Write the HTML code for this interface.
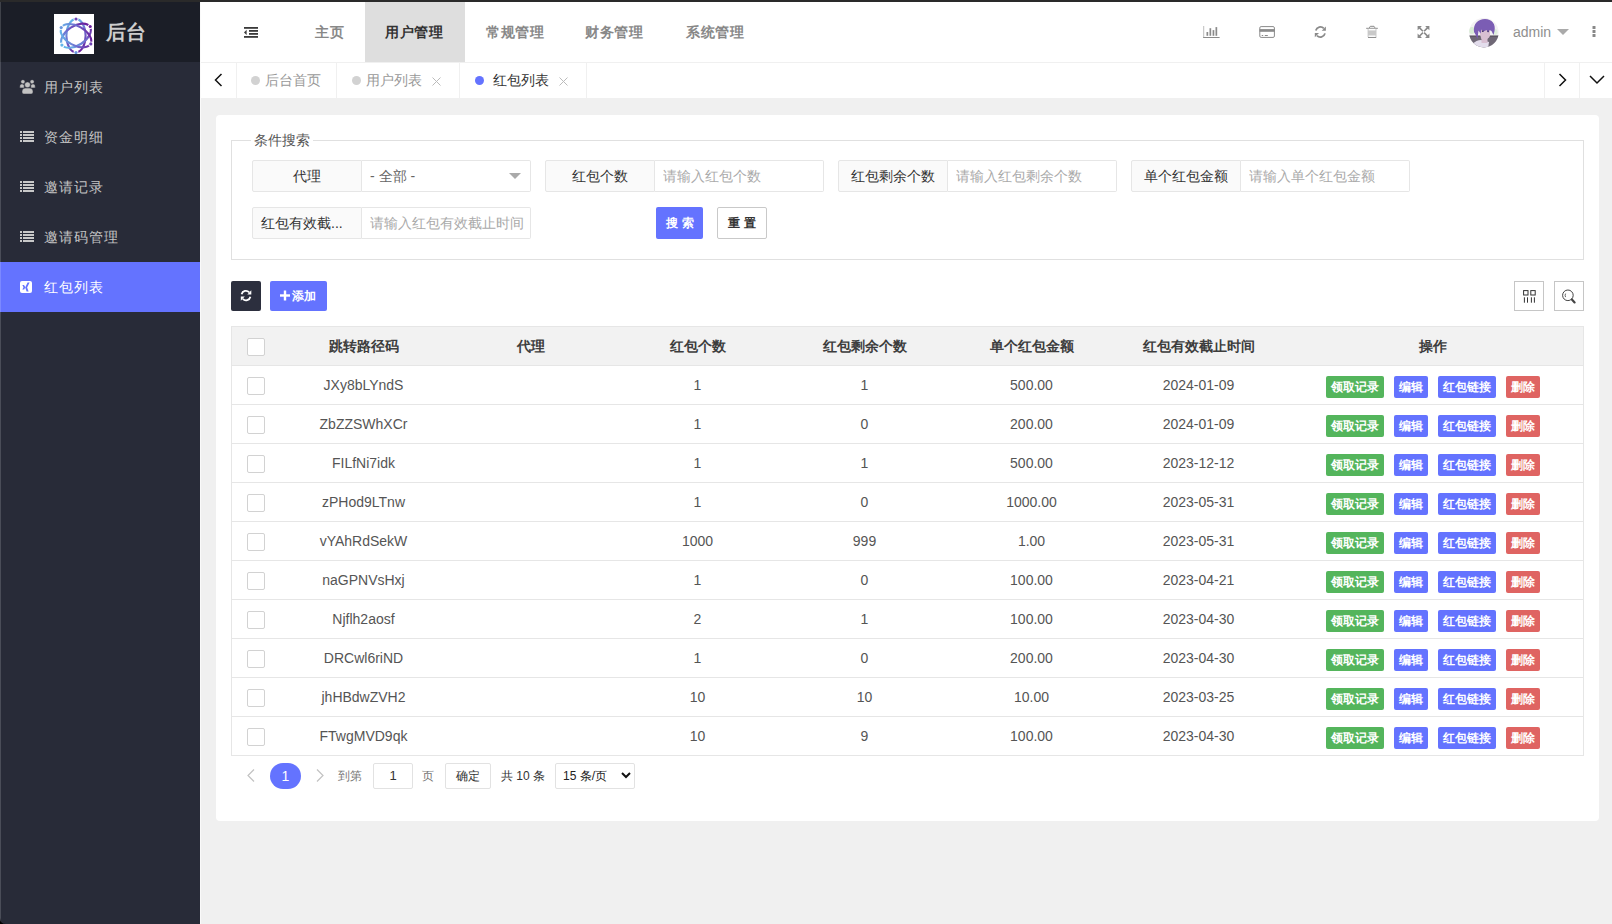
<!DOCTYPE html><html><head><meta charset="utf-8"><title>后台</title><style>
*{box-sizing:border-box;margin:0;padding:0}
html,body{width:1612px;height:924px;overflow:hidden}
body{position:relative;background:#f0f0f0;font-family:"Liberation Sans",sans-serif;font-size:14px;color:#333}
.a{position:absolute}
.tx{position:absolute;white-space:nowrap}
</style></head><body>
<div class="a" style="left:0;top:0;width:1612px;height:2px;background:#2a2a2a"></div>
<div class="a" style="left:0;top:62px;width:200px;height:862px;background:#282b38"></div>
<div class="a" style="left:0;top:2px;width:200px;height:60px;background:#1b1e27"></div>
<div class="a" style="left:200px;top:2px;width:1px;height:922px;background:#fafafa"></div>
<svg class="a" style="left:54px;top:14px" width="40" height="40" viewBox="0 0 40 40">
<rect x="0" y="0" width="40" height="40" fill="#fff"/>
<defs><linearGradient id="lg" gradientUnits="userSpaceOnUse" x1="8" y1="30" x2="36" y2="14"><stop offset="0" stop-color="#64b8ea"/><stop offset="0.5" stop-color="#6f6fd0"/><stop offset="1" stop-color="#6a1d9c"/></linearGradient></defs>
<g fill="none" stroke="url(#lg)" stroke-width="2.1">
<ellipse cx="22" cy="21.7" rx="16.6" ry="9.6" transform="rotate(90 22 21.7)"/>
<ellipse cx="22" cy="21.7" rx="16.6" ry="9.6" transform="rotate(-33 22 21.7)"/>
<ellipse cx="22" cy="21.7" rx="16.6" ry="9.6" transform="rotate(29 22 21.7)"/>
</g>
<g fill="#fff"><circle cx="22" cy="5" r="2.5"/><circle cx="36.2" cy="12.5" r="2.5"/><circle cx="36.8" cy="29.9" r="2.5"/><circle cx="7.2" cy="13.6" r="2.5"/><circle cx="7.9" cy="31.1" r="2.5"/><circle cx="22" cy="38.5" r="2.5"/></g>
<g fill="url(#lg)"><circle cx="22" cy="5" r="1.6"/><circle cx="36.2" cy="12.5" r="1.6"/><circle cx="36.8" cy="29.9" r="1.6"/><circle cx="7.2" cy="13.6" r="1.6"/><circle cx="7.9" cy="31.1" r="1.6"/><circle cx="22" cy="38.5" r="1.6"/></g>
</svg>
<div class="tx" style="left:106px;top:19px;font-size:20px;line-height:26px;color:#cdcdcd;font-weight:bold">后台</div>
<svg class="a" style="left:16px;top:76px" width="24" height="22" viewBox="0 0 24 22"><g fill="#c2c2c2" stroke="#282b38" stroke-width="0.5"><circle cx="6.9" cy="5.8" r="2.1"/><circle cx="16.1" cy="5.8" r="2.1"/><path d="M3.8 11.9 V10 C3.8 8.6 4.8 7.9 6 7.9 C7.2 7.9 8.2 8.6 8.2 10 V11.9Z"/><path d="M14.8 11.9 V10 C14.8 8.6 15.8 7.9 17 7.9 C18.2 7.9 19.2 8.6 19.2 10 V11.9Z"/><circle cx="11.5" cy="8.8" r="2.9"/><path d="M6 15.5 C6 13.2 7.5 12.1 9.5 12.1 H13.5 C15.5 12.1 17 13.2 17 15.5 V16 C17 17.4 16 18 14.8 18 H8.2 C7 18 6 17.4 6 16Z"/></g></svg>
<div class="tx" style="left:44px;top:62px;line-height:50px;font-size:14px;letter-spacing:1px;color:#c4c4c4">用户列表</div>
<svg class="a" style="left:20px;top:131px" width="14" height="11" viewBox="0 0 14 11" fill="#c8c8c8"><rect x="0" y="0" width="2" height="2"/><rect x="3" y="0" width="11" height="2"/><rect x="0" y="3" width="2" height="2"/><rect x="3" y="3" width="11" height="2"/><rect x="0" y="6" width="2" height="2"/><rect x="3" y="6" width="11" height="2"/><rect x="0" y="9" width="2" height="2"/><rect x="3" y="9" width="11" height="2"/></svg>
<div class="tx" style="left:44px;top:112px;line-height:50px;font-size:14px;letter-spacing:1px;color:#c4c4c4">资金明细</div>
<svg class="a" style="left:20px;top:181px" width="14" height="11" viewBox="0 0 14 11" fill="#c8c8c8"><rect x="0" y="0" width="2" height="2"/><rect x="3" y="0" width="11" height="2"/><rect x="0" y="3" width="2" height="2"/><rect x="3" y="3" width="11" height="2"/><rect x="0" y="6" width="2" height="2"/><rect x="3" y="6" width="11" height="2"/><rect x="0" y="9" width="2" height="2"/><rect x="3" y="9" width="11" height="2"/></svg>
<div class="tx" style="left:44px;top:162px;line-height:50px;font-size:14px;letter-spacing:1px;color:#c4c4c4">邀请记录</div>
<svg class="a" style="left:20px;top:231px" width="14" height="11" viewBox="0 0 14 11" fill="#c8c8c8"><rect x="0" y="0" width="2" height="2"/><rect x="3" y="0" width="11" height="2"/><rect x="0" y="3" width="2" height="2"/><rect x="3" y="3" width="11" height="2"/><rect x="0" y="6" width="2" height="2"/><rect x="3" y="6" width="11" height="2"/><rect x="0" y="9" width="2" height="2"/><rect x="3" y="9" width="11" height="2"/></svg>
<div class="tx" style="left:44px;top:212px;line-height:50px;font-size:14px;letter-spacing:1px;color:#c4c4c4">邀请码管理</div>
<div class="a" style="left:0;top:262px;width:200px;height:50px;background:#6473ff"></div>
<svg class="a" style="left:20px;top:281px" width="12" height="12" viewBox="0 0 12 12"><rect x="0" y="0" width="12" height="12" rx="2" fill="#fff"/><path d="M2.3 4 H4 L5.3 6.2 L4.2 8.4 H2.3 L3.5 6.2 Z" fill="#6473ff"/><path d="M7.6 1.4 H9.6 L7.1 6.6 L8.6 10.5 H6.6 L5.2 6.6 Z" fill="#6473ff"/></svg>
<div class="tx" style="left:44px;top:262px;line-height:50px;font-size:14px;letter-spacing:1px;color:#fff">红包列表</div>
<div class="a" style="left:0;top:2px;width:1px;height:922px;background:rgba(255,255,255,0.16)"></div>
<svg class="a" style="left:0;top:918px" width="6" height="6" viewBox="0 0 6 6"><path d="M0 0 Q0 6 6 6 H0Z" fill="#000"/></svg>
<div class="a" style="left:201px;top:2px;width:1411px;height:60px;background:#fff"></div>
<div class="a" style="left:365px;top:2px;width:100px;height:60px;background:#dedede"></div>
<svg class="a" style="left:244px;top:27px" width="14" height="11" viewBox="0 0 14 11" fill="#3a3a3a"><rect x="0" y="0" width="14" height="1.8"/><rect x="5" y="3" width="9" height="1.8"/><rect x="5" y="6" width="9" height="1.8"/><rect x="0" y="9" width="14" height="1.8"/><path d="M0 5.4 L2.6 2.8 V8Z"/></svg>
<div class="tx" style="left:315px;top:2px;line-height:60px;font-size:14px;font-weight:bold;letter-spacing:0.6px;color:#888">主页</div>
<div class="tx" style="left:385px;top:2px;line-height:60px;font-size:14px;font-weight:bold;letter-spacing:0.6px;color:#333">用户管理</div>
<div class="tx" style="left:486px;top:2px;line-height:60px;font-size:14px;font-weight:bold;letter-spacing:0.6px;color:#888">常规管理</div>
<div class="tx" style="left:585px;top:2px;line-height:60px;font-size:14px;font-weight:bold;letter-spacing:0.6px;color:#888">财务管理</div>
<div class="tx" style="left:686px;top:2px;line-height:60px;font-size:14px;font-weight:bold;letter-spacing:0.6px;color:#888">系统管理</div>
<svg class="a" style="left:1198px;top:20px" width="24" height="20" viewBox="0 0 24 20"><rect x="5.2" y="6" width="1" height="12" fill="#bdbdbd"/><rect x="5.2" y="17" width="16.4" height="1" fill="#8a8a8a"/><g fill="#8a8a8a"><rect x="8.5" y="12" width="1.7" height="3.8"/><rect x="11.5" y="8.2" width="1.7" height="7.6"/><rect x="14.6" y="10.1" width="1.7" height="5.7"/><rect x="17.5" y="7.1" width="1.7" height="8.7"/></g></svg>
<svg class="a" style="left:1254px;top:20px" width="24" height="20" viewBox="0 0 24 20"><rect x="5.8" y="6.6" width="14.6" height="10.8" rx="1.3" fill="none" stroke="#8a8a8a" stroke-width="1"/><rect x="5.5" y="9.1" width="15.2" height="2.7" fill="#8a8a8a"/><rect x="7.7" y="15" width="1.5" height="1" fill="#8a8a8a"/><rect x="10.8" y="15" width="3" height="1" fill="#8a8a8a"/></svg>
<svg class="a" style="left:1308px;top:20px" width="24" height="20" viewBox="0 0 24 20"><g fill="none" stroke="#8a8a8a" stroke-width="1.8"><path d="M7.8 10.4 A4.7 4.7 0 0 1 15.8 8.4"/><path d="M17 13.4 A4.7 4.7 0 0 1 9 15.6"/></g><g fill="#8a8a8a"><path d="M17.9 6.5 V10.7 H13.7Z"/><path d="M6.8 13.1 H11 L6.8 17.3Z"/></g></svg>
<svg class="a" style="left:1360px;top:20px" width="24" height="20" viewBox="0 0 24 20"><rect x="6.2" y="7.8" width="11.6" height="1" fill="#8a8a8a"/><path d="M9.3 7.9 L10.3 6.3 H14 L15 7.9" fill="none" stroke="#8a8a8a" stroke-width="1"/><path d="M7.6 8.8 H16.5 V16.5 Q16.5 17.9 15.2 17.9 H8.9 Q7.6 17.9 7.6 16.5Z" fill="#c9c9c9"/><rect x="8.6" y="9" width="6.9" height="1.4" fill="#fff"/><rect x="8.6" y="15.5" width="6.9" height="1.4" fill="#fff"/><rect x="8" y="17" width="8.2" height="0.9" fill="#8a8a8a"/></svg>
<svg class="a" style="left:1410px;top:20px" width="24" height="20" viewBox="0 0 24 20" fill="#8a8a8a"><path d="M7.6 6.1 H11.9 L10.4 7.6 L13.5 10.7 L12.4 11.8 L9.3 8.7 L7.6 10.3Z"/><path d="M19.4 6.1 V10.3 L17.8 8.7 L14.7 11.8 L13.5 10.7 L16.6 7.6 L15.1 6.1Z"/><path d="M7.6 17.9 V13.6 L9.3 15.2 L12.4 12.1 L13.5 13.2 L10.4 16.3 L11.9 17.9Z"/><path d="M19.4 17.9 H15.1 L16.6 16.3 L13.5 13.2 L14.7 12.1 L17.8 15.2 L19.4 13.6Z"/></svg>
<svg class="a" style="left:1469px;top:18px" width="30" height="30" viewBox="0 0 30 30"><defs><clipPath id="av"><circle cx="14.9" cy="14.6" r="14.8"/></clipPath></defs><g clip-path="url(#av)">
<rect width="30" height="30" fill="#f3f1f3"/><ellipse cx="3" cy="12.5" rx="3" ry="3.5" fill="#d9ecd6"/><ellipse cx="26" cy="14" rx="2.5" ry="3" fill="#deefdc"/>
<rect x="0" y="18" width="30" height="13" fill="#6f6876"/><rect x="0" y="17.5" width="30" height="1" fill="#4d4650"/>
<path d="M3 27 C6 23 9 22 12 22 L20 24 L19 31 L3 31Z" fill="#e3ddec"/>
<path d="M10.5 10 C12 8 19 8 21 11 L21 18 C19.5 21.5 15 22.5 12.5 21 C11 18 10.5 14 10.5 10Z" fill="#d8bfd2"/><rect x="12.5" y="18" width="6" height="7" fill="#d8bfd2"/>
<path d="M5 14 C4 6 9 1 16 1 C23 1 27 6 25.5 13 L24.5 17 L22.5 13 L20.5 12 L19.5 14.5 L17.5 12 L14.5 13.5 L12.5 11.5 L11.5 15.5 L9.5 12.5 L8.5 21 L6.5 16.5Z" fill="#7b5db4"/>
<circle cx="13.8" cy="13.2" r="0.9" fill="#4a3a70"/><circle cx="19" cy="13.4" r="0.8" fill="#4a3a70"/>
</g></svg>
<div class="tx" style="left:1513px;top:21px;line-height:22px;font-size:14px;color:#8f8f8f">admin</div>
<svg class="a" style="left:1557px;top:29px" width="12" height="6" viewBox="0 0 12 6"><path d="M0 0H12L6 6Z" fill="#aaa"/></svg>
<svg class="a" style="left:1592px;top:26px" width="4" height="11" viewBox="0 0 4 11" fill="#888"><rect x="0.5" y="0" width="3" height="3" rx="0.5"/><rect x="0.5" y="4" width="3" height="3" rx="0.5"/><rect x="0.5" y="8" width="3" height="3" rx="0.5"/></svg>
<div class="a" style="left:201px;top:62px;width:1411px;height:36px;background:#fff;border-top:1px solid #f0f0f0"></div>
<div class="a" style="left:236px;top:63px;width:1px;height:35px;background:#f0f0f0"></div>
<div class="a" style="left:336px;top:63px;width:1px;height:35px;background:#f0f0f0"></div>
<div class="a" style="left:459px;top:63px;width:1px;height:35px;background:#f0f0f0"></div>
<div class="a" style="left:586px;top:63px;width:1px;height:35px;background:#f0f0f0"></div>
<div class="a" style="left:1544px;top:63px;width:1px;height:35px;background:#f0f0f0"></div>
<div class="a" style="left:1579px;top:63px;width:1px;height:35px;background:#f0f0f0"></div>
<svg class="a" style="left:214px;top:73px" width="9" height="14" viewBox="0 0 9 14"><path d="M7.5 1 L1.5 7 L7.5 13" fill="none" stroke="#111" stroke-width="1.5"/></svg>
<svg class="a" style="left:1558px;top:73px" width="9" height="14" viewBox="0 0 9 14"><path d="M1.5 1 L7.5 7 L1.5 13" fill="none" stroke="#111" stroke-width="1.5"/></svg>
<svg class="a" style="left:1589px;top:75px" width="16" height="10" viewBox="0 0 16 10"><path d="M1 1 L8 8 L15 1" fill="none" stroke="#111" stroke-width="1.5"/></svg>
<div class="a" style="left:251px;top:76px;width:9px;height:9px;border-radius:50%;background:#d2d2d2"></div>
<div class="a" style="left:352px;top:76px;width:9px;height:9px;border-radius:50%;background:#d2d2d2"></div>
<div class="a" style="left:475px;top:76px;width:9px;height:9px;border-radius:50%;background:#6473ff"></div>
<div class="tx" style="left:265px;top:70px;line-height:20px;font-size:14px;color:#999">后台首页</div>
<div class="tx" style="left:366px;top:70px;line-height:20px;font-size:14px;color:#999">用户列表</div>
<div class="tx" style="left:493px;top:70px;line-height:20px;font-size:14px;color:#333">红包列表</div>
<svg class="a" style="left:432px;top:77px" width="9" height="9" viewBox="0 0 9 9"><path d="M0.5 0.5L8.5 8.5M8.5 0.5L0.5 8.5" stroke="#bbb" stroke-width="1"/></svg>
<svg class="a" style="left:559px;top:77px" width="9" height="9" viewBox="0 0 9 9"><path d="M0.5 0.5L8.5 8.5M8.5 0.5L0.5 8.5" stroke="#bbb" stroke-width="1"/></svg>
<div class="a" style="left:216px;top:115px;width:1383px;height:706px;background:#fff;border-radius:4px"></div>
<div class="a" style="left:231px;top:140px;width:1353px;height:120px;border:1px solid #e0e0e0"></div>
<div class="tx" style="left:251px;top:130px;padding:0 3px;background:#fff;line-height:20px;font-size:14px;color:#555">条件搜索</div>
<div class="a" style="left:252px;top:160px;width:110px;height:32px;background:#fafafa;border:1px solid #e6e6e6;border-radius:2px 0 0 2px"></div>
<div class="a" style="left:252px;top:160px;width:110px;height:32px;line-height:32px;text-align:center;color:#333;white-space:nowrap">代理</div>
<div class="a" style="left:362px;top:160px;width:169px;height:32px;background:#fff;border:1px solid #e6e6e6;border-left:0;border-radius:0 2px 2px 0;"></div>
<div class="a" style="left:370px;top:160px;width:157px;height:32px;line-height:32px;color:#666;white-space:nowrap;overflow:hidden">- 全部 -</div>
<svg class="a" style="left:509px;top:173px" width="12" height="6" viewBox="0 0 12 6"><path d="M0 0H12L6 6Z" fill="#aaa"/></svg>
<div class="a" style="left:545px;top:160px;width:110px;height:32px;background:#fafafa;border:1px solid #e6e6e6;border-radius:2px 0 0 2px"></div>
<div class="a" style="left:545px;top:160px;width:110px;height:32px;line-height:32px;text-align:center;color:#333;white-space:nowrap">红包个数</div>
<div class="a" style="left:655px;top:160px;width:169px;height:32px;background:#fff;border:1px solid #e6e6e6;border-left:0;border-radius:0 2px 2px 0;"></div>
<div class="a" style="left:663px;top:160px;width:157px;height:32px;line-height:32px;color:#aaa;white-space:nowrap;overflow:hidden">请输入红包个数</div>
<div class="a" style="left:838px;top:160px;width:110px;height:32px;background:#fafafa;border:1px solid #e6e6e6;border-radius:2px 0 0 2px"></div>
<div class="a" style="left:838px;top:160px;width:110px;height:32px;line-height:32px;text-align:center;color:#333;white-space:nowrap">红包剩余个数</div>
<div class="a" style="left:948px;top:160px;width:169px;height:32px;background:#fff;border:1px solid #e6e6e6;border-left:0;border-radius:0 2px 2px 0;"></div>
<div class="a" style="left:956px;top:160px;width:157px;height:32px;line-height:32px;color:#aaa;white-space:nowrap;overflow:hidden">请输入红包剩余个数</div>
<div class="a" style="left:1131px;top:160px;width:110px;height:32px;background:#fafafa;border:1px solid #e6e6e6;border-radius:2px 0 0 2px"></div>
<div class="a" style="left:1131px;top:160px;width:110px;height:32px;line-height:32px;text-align:center;color:#333;white-space:nowrap">单个红包金额</div>
<div class="a" style="left:1241px;top:160px;width:169px;height:32px;background:#fff;border:1px solid #e6e6e6;border-left:0;border-radius:0 2px 2px 0;"></div>
<div class="a" style="left:1249px;top:160px;width:157px;height:32px;line-height:32px;color:#aaa;white-space:nowrap;overflow:hidden">请输入单个红包金额</div>
<div class="a" style="left:252px;top:207px;width:110px;height:32px;background:#fafafa;border:1px solid #e6e6e6;border-radius:2px 0 0 2px"></div>
<div class="tx" style="left:261px;top:207px;height:32px;line-height:32px;color:#333">红包有效截...</div>
<div class="a" style="left:362px;top:207px;width:169px;height:32px;background:#fff;border:1px solid #e6e6e6;border-left:0;border-radius:0 2px 2px 0;"></div>
<div class="a" style="left:370px;top:207px;width:157px;height:32px;line-height:32px;color:#aaa;white-space:nowrap;overflow:hidden">请输入红包有效截止时间</div>
<div class="a" style="left:656px;top:207px;width:47px;height:32px;background:#6473ff;border-radius:2px;color:#fff;font-size:12px;line-height:32px;text-align:center;letter-spacing:4px;padding-left:4px;font-weight:bold">搜索</div>
<div class="a" style="left:717px;top:207px;width:50px;height:32px;background:#fff;border:1px solid #c9c9c9;border-radius:2px;color:#333;font-size:12px;line-height:30px;text-align:center;letter-spacing:4px;padding-left:4px;font-weight:bold">重置</div>
<div class="a" style="left:231px;top:281px;width:30px;height:30px;background:#2c2f3e;border-radius:2px"></div>
<svg class="a" style="left:234px;top:284px" width="24" height="24" viewBox="0 0 24 24"><g fill="none" stroke="#fff" stroke-width="1.8"><path d="M7.6 10.2 A4.4 4.4 0 0 1 15.2 8.4"/><path d="M16.4 12.8 A4.4 4.4 0 0 1 8.8 14.8"/></g><g fill="#fff"><path d="M17.3 6.3 V10.4 H13.3Z"/><path d="M6.8 12.6 H10.8 L6.8 16.7Z"/></g></svg>
<div class="a" style="left:270px;top:281px;width:57px;height:30px;background:#6473ff;border-radius:2px"></div>
<svg class="a" style="left:280px;top:290px" width="10" height="11" viewBox="0 0 10 11" fill="#fff"><rect x="3.8" y="0.5" width="2.4" height="10"/><rect x="0" y="4.3" width="10" height="2.4"/></svg>
<div class="tx" style="left:292px;top:286px;line-height:20px;font-size:12px;color:#fff;font-weight:bold">添加</div>
<div class="a" style="left:1514px;top:281px;width:30px;height:30px;border:1px solid #c6c6c6"></div>
<svg class="a" style="left:1514px;top:281px" width="30" height="30" viewBox="0 0 30 30" fill="none" stroke="#333" stroke-width="1"><rect x="9.6" y="9.6" width="4.4" height="4.4"/><rect x="16.8" y="9.6" width="4.4" height="4.4"/><path d="M10.4 16.3V21.7M13.5 16.3V21.7M17.4 16.3V21.7M20.4 16.3V21.7"/></svg>
<div class="a" style="left:1554px;top:281px;width:30px;height:30px;border:1px solid #c6c6c6"></div>
<svg class="a" style="left:1554px;top:281px" width="30" height="30" viewBox="0 0 30 30" fill="none" stroke="#444" stroke-width="1"><circle cx="13.9" cy="14.3" r="5.3"/><path d="M17.9 18.5 L20.6 21.4" stroke-width="2.2" stroke-linecap="round"/><path d="M11.6 12.6 Q10.6 14.3 11.6 16.1" stroke-width="0.8"/></svg>
<div class="a" style="left:231px;top:326px;width:1353px;height:430px;border:1px solid #e6e6e6"></div>
<div class="a" style="left:232px;top:327px;width:1351px;height:38px;background:#f2f2f2"></div>
<div class="a" style="left:232px;top:365px;width:1351px;height:1px;background:#e6e6e6"></div>
<div class="a" style="left:232px;top:404px;width:1351px;height:1px;background:#e6e6e6"></div>
<div class="a" style="left:232px;top:443px;width:1351px;height:1px;background:#e6e6e6"></div>
<div class="a" style="left:232px;top:482px;width:1351px;height:1px;background:#e6e6e6"></div>
<div class="a" style="left:232px;top:521px;width:1351px;height:1px;background:#e6e6e6"></div>
<div class="a" style="left:232px;top:560px;width:1351px;height:1px;background:#e6e6e6"></div>
<div class="a" style="left:232px;top:599px;width:1351px;height:1px;background:#e6e6e6"></div>
<div class="a" style="left:232px;top:638px;width:1351px;height:1px;background:#e6e6e6"></div>
<div class="a" style="left:232px;top:677px;width:1351px;height:1px;background:#e6e6e6"></div>
<div class="a" style="left:232px;top:716px;width:1351px;height:1px;background:#e6e6e6"></div>
<div class="a" style="left:247px;top:338px;width:18px;height:18px;border:1px solid #d2d2d2;border-radius:2px;background:#fff"></div>
<div class="tx" style="left:280px;top:336px;width:167px;text-align:center;line-height:20px;font-size:14px;font-weight:bold;color:#3d3d3d">跳转路径码</div>
<div class="tx" style="left:447px;top:336px;width:167px;text-align:center;line-height:20px;font-size:14px;font-weight:bold;color:#3d3d3d">代理</div>
<div class="tx" style="left:614px;top:336px;width:167px;text-align:center;line-height:20px;font-size:14px;font-weight:bold;color:#3d3d3d">红包个数</div>
<div class="tx" style="left:781px;top:336px;width:167px;text-align:center;line-height:20px;font-size:14px;font-weight:bold;color:#3d3d3d">红包剩余个数</div>
<div class="tx" style="left:948px;top:336px;width:167px;text-align:center;line-height:20px;font-size:14px;font-weight:bold;color:#3d3d3d">单个红包金额</div>
<div class="tx" style="left:1115px;top:336px;width:167px;text-align:center;line-height:20px;font-size:14px;font-weight:bold;color:#3d3d3d">红包有效截止时间</div>
<div class="tx" style="left:1282px;top:336px;width:301px;text-align:center;line-height:20px;font-size:14px;font-weight:bold;color:#3d3d3d">操作</div>
<div class="a" style="left:247px;top:377px;width:18px;height:18px;border:1px solid #d2d2d2;border-radius:2px;background:#fff"></div>
<div class="tx" style="left:280px;top:366px;width:167px;text-align:center;line-height:38px;font-size:14px;color:#555">JXy8bLYndS</div>
<div class="tx" style="left:614px;top:366px;width:167px;text-align:center;line-height:38px;font-size:14px;color:#555">1</div>
<div class="tx" style="left:781px;top:366px;width:167px;text-align:center;line-height:38px;font-size:14px;color:#555">1</div>
<div class="tx" style="left:948px;top:366px;width:167px;text-align:center;line-height:38px;font-size:14px;color:#555">500.00</div>
<div class="tx" style="left:1115px;top:366px;width:167px;text-align:center;line-height:38px;font-size:14px;color:#555">2024-01-09</div>
<div class="a" style="left:1326px;top:376px;width:58px;height:22px;line-height:22px;background:#54b55c;border-radius:2px;color:#fff;font-size:12px;text-align:center;font-weight:bold">领取记录</div>
<div class="a" style="left:1394px;top:376px;width:34px;height:22px;line-height:22px;background:#6473ff;border-radius:2px;color:#fff;font-size:12px;text-align:center;font-weight:bold">编辑</div>
<div class="a" style="left:1438px;top:376px;width:58px;height:22px;line-height:22px;background:#6473ff;border-radius:2px;color:#fff;font-size:12px;text-align:center;font-weight:bold">红包链接</div>
<div class="a" style="left:1506px;top:376px;width:34px;height:22px;line-height:22px;background:#df6462;border-radius:2px;color:#fff;font-size:12px;text-align:center;font-weight:bold">删除</div>
<div class="a" style="left:247px;top:416px;width:18px;height:18px;border:1px solid #d2d2d2;border-radius:2px;background:#fff"></div>
<div class="tx" style="left:280px;top:405px;width:167px;text-align:center;line-height:38px;font-size:14px;color:#555">ZbZZSWhXCr</div>
<div class="tx" style="left:614px;top:405px;width:167px;text-align:center;line-height:38px;font-size:14px;color:#555">1</div>
<div class="tx" style="left:781px;top:405px;width:167px;text-align:center;line-height:38px;font-size:14px;color:#555">0</div>
<div class="tx" style="left:948px;top:405px;width:167px;text-align:center;line-height:38px;font-size:14px;color:#555">200.00</div>
<div class="tx" style="left:1115px;top:405px;width:167px;text-align:center;line-height:38px;font-size:14px;color:#555">2024-01-09</div>
<div class="a" style="left:1326px;top:415px;width:58px;height:22px;line-height:22px;background:#54b55c;border-radius:2px;color:#fff;font-size:12px;text-align:center;font-weight:bold">领取记录</div>
<div class="a" style="left:1394px;top:415px;width:34px;height:22px;line-height:22px;background:#6473ff;border-radius:2px;color:#fff;font-size:12px;text-align:center;font-weight:bold">编辑</div>
<div class="a" style="left:1438px;top:415px;width:58px;height:22px;line-height:22px;background:#6473ff;border-radius:2px;color:#fff;font-size:12px;text-align:center;font-weight:bold">红包链接</div>
<div class="a" style="left:1506px;top:415px;width:34px;height:22px;line-height:22px;background:#df6462;border-radius:2px;color:#fff;font-size:12px;text-align:center;font-weight:bold">删除</div>
<div class="a" style="left:247px;top:455px;width:18px;height:18px;border:1px solid #d2d2d2;border-radius:2px;background:#fff"></div>
<div class="tx" style="left:280px;top:444px;width:167px;text-align:center;line-height:38px;font-size:14px;color:#555">FILfNi7idk</div>
<div class="tx" style="left:614px;top:444px;width:167px;text-align:center;line-height:38px;font-size:14px;color:#555">1</div>
<div class="tx" style="left:781px;top:444px;width:167px;text-align:center;line-height:38px;font-size:14px;color:#555">1</div>
<div class="tx" style="left:948px;top:444px;width:167px;text-align:center;line-height:38px;font-size:14px;color:#555">500.00</div>
<div class="tx" style="left:1115px;top:444px;width:167px;text-align:center;line-height:38px;font-size:14px;color:#555">2023-12-12</div>
<div class="a" style="left:1326px;top:454px;width:58px;height:22px;line-height:22px;background:#54b55c;border-radius:2px;color:#fff;font-size:12px;text-align:center;font-weight:bold">领取记录</div>
<div class="a" style="left:1394px;top:454px;width:34px;height:22px;line-height:22px;background:#6473ff;border-radius:2px;color:#fff;font-size:12px;text-align:center;font-weight:bold">编辑</div>
<div class="a" style="left:1438px;top:454px;width:58px;height:22px;line-height:22px;background:#6473ff;border-radius:2px;color:#fff;font-size:12px;text-align:center;font-weight:bold">红包链接</div>
<div class="a" style="left:1506px;top:454px;width:34px;height:22px;line-height:22px;background:#df6462;border-radius:2px;color:#fff;font-size:12px;text-align:center;font-weight:bold">删除</div>
<div class="a" style="left:247px;top:494px;width:18px;height:18px;border:1px solid #d2d2d2;border-radius:2px;background:#fff"></div>
<div class="tx" style="left:280px;top:483px;width:167px;text-align:center;line-height:38px;font-size:14px;color:#555">zPHod9LTnw</div>
<div class="tx" style="left:614px;top:483px;width:167px;text-align:center;line-height:38px;font-size:14px;color:#555">1</div>
<div class="tx" style="left:781px;top:483px;width:167px;text-align:center;line-height:38px;font-size:14px;color:#555">0</div>
<div class="tx" style="left:948px;top:483px;width:167px;text-align:center;line-height:38px;font-size:14px;color:#555">1000.00</div>
<div class="tx" style="left:1115px;top:483px;width:167px;text-align:center;line-height:38px;font-size:14px;color:#555">2023-05-31</div>
<div class="a" style="left:1326px;top:493px;width:58px;height:22px;line-height:22px;background:#54b55c;border-radius:2px;color:#fff;font-size:12px;text-align:center;font-weight:bold">领取记录</div>
<div class="a" style="left:1394px;top:493px;width:34px;height:22px;line-height:22px;background:#6473ff;border-radius:2px;color:#fff;font-size:12px;text-align:center;font-weight:bold">编辑</div>
<div class="a" style="left:1438px;top:493px;width:58px;height:22px;line-height:22px;background:#6473ff;border-radius:2px;color:#fff;font-size:12px;text-align:center;font-weight:bold">红包链接</div>
<div class="a" style="left:1506px;top:493px;width:34px;height:22px;line-height:22px;background:#df6462;border-radius:2px;color:#fff;font-size:12px;text-align:center;font-weight:bold">删除</div>
<div class="a" style="left:247px;top:533px;width:18px;height:18px;border:1px solid #d2d2d2;border-radius:2px;background:#fff"></div>
<div class="tx" style="left:280px;top:522px;width:167px;text-align:center;line-height:38px;font-size:14px;color:#555">vYAhRdSekW</div>
<div class="tx" style="left:614px;top:522px;width:167px;text-align:center;line-height:38px;font-size:14px;color:#555">1000</div>
<div class="tx" style="left:781px;top:522px;width:167px;text-align:center;line-height:38px;font-size:14px;color:#555">999</div>
<div class="tx" style="left:948px;top:522px;width:167px;text-align:center;line-height:38px;font-size:14px;color:#555">1.00</div>
<div class="tx" style="left:1115px;top:522px;width:167px;text-align:center;line-height:38px;font-size:14px;color:#555">2023-05-31</div>
<div class="a" style="left:1326px;top:532px;width:58px;height:22px;line-height:22px;background:#54b55c;border-radius:2px;color:#fff;font-size:12px;text-align:center;font-weight:bold">领取记录</div>
<div class="a" style="left:1394px;top:532px;width:34px;height:22px;line-height:22px;background:#6473ff;border-radius:2px;color:#fff;font-size:12px;text-align:center;font-weight:bold">编辑</div>
<div class="a" style="left:1438px;top:532px;width:58px;height:22px;line-height:22px;background:#6473ff;border-radius:2px;color:#fff;font-size:12px;text-align:center;font-weight:bold">红包链接</div>
<div class="a" style="left:1506px;top:532px;width:34px;height:22px;line-height:22px;background:#df6462;border-radius:2px;color:#fff;font-size:12px;text-align:center;font-weight:bold">删除</div>
<div class="a" style="left:247px;top:572px;width:18px;height:18px;border:1px solid #d2d2d2;border-radius:2px;background:#fff"></div>
<div class="tx" style="left:280px;top:561px;width:167px;text-align:center;line-height:38px;font-size:14px;color:#555">naGPNVsHxj</div>
<div class="tx" style="left:614px;top:561px;width:167px;text-align:center;line-height:38px;font-size:14px;color:#555">1</div>
<div class="tx" style="left:781px;top:561px;width:167px;text-align:center;line-height:38px;font-size:14px;color:#555">0</div>
<div class="tx" style="left:948px;top:561px;width:167px;text-align:center;line-height:38px;font-size:14px;color:#555">100.00</div>
<div class="tx" style="left:1115px;top:561px;width:167px;text-align:center;line-height:38px;font-size:14px;color:#555">2023-04-21</div>
<div class="a" style="left:1326px;top:571px;width:58px;height:22px;line-height:22px;background:#54b55c;border-radius:2px;color:#fff;font-size:12px;text-align:center;font-weight:bold">领取记录</div>
<div class="a" style="left:1394px;top:571px;width:34px;height:22px;line-height:22px;background:#6473ff;border-radius:2px;color:#fff;font-size:12px;text-align:center;font-weight:bold">编辑</div>
<div class="a" style="left:1438px;top:571px;width:58px;height:22px;line-height:22px;background:#6473ff;border-radius:2px;color:#fff;font-size:12px;text-align:center;font-weight:bold">红包链接</div>
<div class="a" style="left:1506px;top:571px;width:34px;height:22px;line-height:22px;background:#df6462;border-radius:2px;color:#fff;font-size:12px;text-align:center;font-weight:bold">删除</div>
<div class="a" style="left:247px;top:611px;width:18px;height:18px;border:1px solid #d2d2d2;border-radius:2px;background:#fff"></div>
<div class="tx" style="left:280px;top:600px;width:167px;text-align:center;line-height:38px;font-size:14px;color:#555">Njflh2aosf</div>
<div class="tx" style="left:614px;top:600px;width:167px;text-align:center;line-height:38px;font-size:14px;color:#555">2</div>
<div class="tx" style="left:781px;top:600px;width:167px;text-align:center;line-height:38px;font-size:14px;color:#555">1</div>
<div class="tx" style="left:948px;top:600px;width:167px;text-align:center;line-height:38px;font-size:14px;color:#555">100.00</div>
<div class="tx" style="left:1115px;top:600px;width:167px;text-align:center;line-height:38px;font-size:14px;color:#555">2023-04-30</div>
<div class="a" style="left:1326px;top:610px;width:58px;height:22px;line-height:22px;background:#54b55c;border-radius:2px;color:#fff;font-size:12px;text-align:center;font-weight:bold">领取记录</div>
<div class="a" style="left:1394px;top:610px;width:34px;height:22px;line-height:22px;background:#6473ff;border-radius:2px;color:#fff;font-size:12px;text-align:center;font-weight:bold">编辑</div>
<div class="a" style="left:1438px;top:610px;width:58px;height:22px;line-height:22px;background:#6473ff;border-radius:2px;color:#fff;font-size:12px;text-align:center;font-weight:bold">红包链接</div>
<div class="a" style="left:1506px;top:610px;width:34px;height:22px;line-height:22px;background:#df6462;border-radius:2px;color:#fff;font-size:12px;text-align:center;font-weight:bold">删除</div>
<div class="a" style="left:247px;top:650px;width:18px;height:18px;border:1px solid #d2d2d2;border-radius:2px;background:#fff"></div>
<div class="tx" style="left:280px;top:639px;width:167px;text-align:center;line-height:38px;font-size:14px;color:#555">DRCwl6riND</div>
<div class="tx" style="left:614px;top:639px;width:167px;text-align:center;line-height:38px;font-size:14px;color:#555">1</div>
<div class="tx" style="left:781px;top:639px;width:167px;text-align:center;line-height:38px;font-size:14px;color:#555">0</div>
<div class="tx" style="left:948px;top:639px;width:167px;text-align:center;line-height:38px;font-size:14px;color:#555">200.00</div>
<div class="tx" style="left:1115px;top:639px;width:167px;text-align:center;line-height:38px;font-size:14px;color:#555">2023-04-30</div>
<div class="a" style="left:1326px;top:649px;width:58px;height:22px;line-height:22px;background:#54b55c;border-radius:2px;color:#fff;font-size:12px;text-align:center;font-weight:bold">领取记录</div>
<div class="a" style="left:1394px;top:649px;width:34px;height:22px;line-height:22px;background:#6473ff;border-radius:2px;color:#fff;font-size:12px;text-align:center;font-weight:bold">编辑</div>
<div class="a" style="left:1438px;top:649px;width:58px;height:22px;line-height:22px;background:#6473ff;border-radius:2px;color:#fff;font-size:12px;text-align:center;font-weight:bold">红包链接</div>
<div class="a" style="left:1506px;top:649px;width:34px;height:22px;line-height:22px;background:#df6462;border-radius:2px;color:#fff;font-size:12px;text-align:center;font-weight:bold">删除</div>
<div class="a" style="left:247px;top:689px;width:18px;height:18px;border:1px solid #d2d2d2;border-radius:2px;background:#fff"></div>
<div class="tx" style="left:280px;top:678px;width:167px;text-align:center;line-height:38px;font-size:14px;color:#555">jhHBdwZVH2</div>
<div class="tx" style="left:614px;top:678px;width:167px;text-align:center;line-height:38px;font-size:14px;color:#555">10</div>
<div class="tx" style="left:781px;top:678px;width:167px;text-align:center;line-height:38px;font-size:14px;color:#555">10</div>
<div class="tx" style="left:948px;top:678px;width:167px;text-align:center;line-height:38px;font-size:14px;color:#555">10.00</div>
<div class="tx" style="left:1115px;top:678px;width:167px;text-align:center;line-height:38px;font-size:14px;color:#555">2023-03-25</div>
<div class="a" style="left:1326px;top:688px;width:58px;height:22px;line-height:22px;background:#54b55c;border-radius:2px;color:#fff;font-size:12px;text-align:center;font-weight:bold">领取记录</div>
<div class="a" style="left:1394px;top:688px;width:34px;height:22px;line-height:22px;background:#6473ff;border-radius:2px;color:#fff;font-size:12px;text-align:center;font-weight:bold">编辑</div>
<div class="a" style="left:1438px;top:688px;width:58px;height:22px;line-height:22px;background:#6473ff;border-radius:2px;color:#fff;font-size:12px;text-align:center;font-weight:bold">红包链接</div>
<div class="a" style="left:1506px;top:688px;width:34px;height:22px;line-height:22px;background:#df6462;border-radius:2px;color:#fff;font-size:12px;text-align:center;font-weight:bold">删除</div>
<div class="a" style="left:247px;top:728px;width:18px;height:18px;border:1px solid #d2d2d2;border-radius:2px;background:#fff"></div>
<div class="tx" style="left:280px;top:717px;width:167px;text-align:center;line-height:38px;font-size:14px;color:#555">FTwgMVD9qk</div>
<div class="tx" style="left:614px;top:717px;width:167px;text-align:center;line-height:38px;font-size:14px;color:#555">10</div>
<div class="tx" style="left:781px;top:717px;width:167px;text-align:center;line-height:38px;font-size:14px;color:#555">9</div>
<div class="tx" style="left:948px;top:717px;width:167px;text-align:center;line-height:38px;font-size:14px;color:#555">100.00</div>
<div class="tx" style="left:1115px;top:717px;width:167px;text-align:center;line-height:38px;font-size:14px;color:#555">2023-04-30</div>
<div class="a" style="left:1326px;top:727px;width:58px;height:22px;line-height:22px;background:#54b55c;border-radius:2px;color:#fff;font-size:12px;text-align:center;font-weight:bold">领取记录</div>
<div class="a" style="left:1394px;top:727px;width:34px;height:22px;line-height:22px;background:#6473ff;border-radius:2px;color:#fff;font-size:12px;text-align:center;font-weight:bold">编辑</div>
<div class="a" style="left:1438px;top:727px;width:58px;height:22px;line-height:22px;background:#6473ff;border-radius:2px;color:#fff;font-size:12px;text-align:center;font-weight:bold">红包链接</div>
<div class="a" style="left:1506px;top:727px;width:34px;height:22px;line-height:22px;background:#df6462;border-radius:2px;color:#fff;font-size:12px;text-align:center;font-weight:bold">删除</div>
<svg class="a" style="left:247px;top:769px" width="8" height="13" viewBox="0 0 8 13"><path d="M7 0.5 L1 6.5 L7 12.5" fill="none" stroke="#c2c2c2" stroke-width="1.2"/></svg>
<div class="a" style="left:270px;top:763px;width:31px;height:26px;border-radius:13px;background:#6473ff;color:#fff;line-height:26px;text-align:center;font-size:14px">1</div>
<svg class="a" style="left:316px;top:769px" width="8" height="13" viewBox="0 0 8 13"><path d="M1 0.5 L7 6.5 L1 12.5" fill="none" stroke="#c2c2c2" stroke-width="1.2"/></svg>
<div class="tx" style="left:338px;top:766px;line-height:20px;font-size:12px;color:#777">到第</div>
<div class="a" style="left:373px;top:763px;width:40px;height:26px;border:1px solid #e2e2e2;border-radius:2px;line-height:24px;text-align:center;font-size:13px;color:#333">1</div>
<div class="tx" style="left:422px;top:766px;line-height:20px;font-size:12px;color:#777">页</div>
<div class="a" style="left:445px;top:763px;width:46px;height:26px;border:1px solid #e2e2e2;border-radius:2px;line-height:24px;text-align:center;font-size:12px;color:#333">确定</div>
<div class="tx" style="left:501px;top:766px;line-height:20px;font-size:12px;color:#333">共 10 条</div>
<div class="a" style="left:555px;top:763px;width:80px;height:26px;border:1px solid #e2e2e2;border-radius:2px"></div>
<div class="tx" style="left:563px;top:766px;line-height:20px;font-size:12px;color:#222">15 条/页</div>
<svg class="a" style="left:621px;top:772px" width="10" height="7" viewBox="0 0 10 7"><path d="M1 1 L5 5 L9 1" fill="none" stroke="#111" stroke-width="2"/></svg>
</body></html>
